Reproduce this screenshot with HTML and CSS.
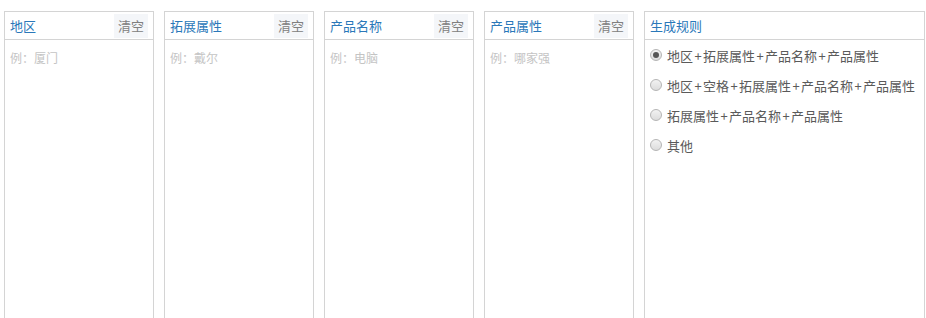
FILE: index.html
```html
<!DOCTYPE html>
<html lang="zh-CN">
<head>
  <meta charset="UTF-8">
  <title>生成规则</title>
  <link rel="stylesheet" href="styles.css">
</head>
<body>
  <div class="panels">
    <div class="panel">
      <div class="panel-head">
        <span class="panel-title">地区</span>
        <span class="clear-btn">清空</span>
      </div>
      <div class="panel-body">
        <div class="placeholder">例：厦门</div>
      </div>
    </div>
    <div class="panel">
      <div class="panel-head">
        <span class="panel-title">拓展属性</span>
        <span class="clear-btn">清空</span>
      </div>
      <div class="panel-body">
        <div class="placeholder">例：戴尔</div>
      </div>
    </div>
    <div class="panel">
      <div class="panel-head">
        <span class="panel-title">产品名称</span>
        <span class="clear-btn">清空</span>
      </div>
      <div class="panel-body">
        <div class="placeholder">例：电脑</div>
      </div>
    </div>
    <div class="panel">
      <div class="panel-head">
        <span class="panel-title">产品属性</span>
        <span class="clear-btn">清空</span>
      </div>
      <div class="panel-body">
        <div class="placeholder">例：哪家强</div>
      </div>
    </div>
    <div class="panel panel-rules">
      <div class="panel-head">
        <span class="panel-title">生成规则</span>
      </div>
      <div class="rule-list">
        <label class="rule"><span class="radio checked"></span>地区<i>+</i>拓展属性<i>+</i>产品名称<i>+</i>产品属性</label>
        <label class="rule"><span class="radio"></span>地区<i>+</i>空格<i>+</i>拓展属性<i>+</i>产品名称<i>+</i>产品属性</label>
        <label class="rule"><span class="radio"></span>拓展属性<i>+</i>产品名称<i>+</i>产品属性</label>
        <label class="rule"><span class="radio"></span>其他</label>
      </div>
    </div>
  </div>
</body>
</html>
```

FILE: styles.css
```css
* {
  box-sizing: border-box;
}

body {
  margin: 0;
  padding: 11px 1px 0 4px;
  font-family: "Noto Sans CJK SC", "Noto Sans", sans-serif;
  font-size: 13px;
  color: #555;
  background: #fff;
  overflow: hidden;
}

.panels {
  display: flex;
  gap: 10px;
}

.panel {
  width: 150px;
  height: 330px;
  border: 1px solid #d4d4d4;
  background: #fff;
}

.panel-rules {
  flex: 1;
}

.panel-head {
  display: flex;
  align-items: center;
  justify-content: space-between;
  height: 28px;
  padding: 0 5px;
  border-bottom: 1px solid #d4d4d4;
}

.panel-title {
  color: #2a78b9;
  line-height: 1;
}

.clear-btn {
  display: flex;
  align-items: center;
  height: 24px;
  padding: 0 4px;
  background: #f4f6f9;
  color: #808080;
}

.panel-body {
  padding: 9px 5px;
}

.placeholder {
  font-size: 12px;
  color: #c4c4c4;
}

.rule-list {
  display: flex;
  flex-direction: column;
  gap: 10px;
  padding: 5px 5px;
}

.rule {
  display: flex;
  align-items: center;
  height: 20px;
  color: #5a5a5a;
}

.rule i {
  font-style: normal;
  padding: 0 1.4px;
}

.radio {
  width: 12px;
  height: 12px;
  margin-right: 5px;
  border-radius: 50%;
  border: 1px solid #b5b5b5;
  background: linear-gradient(#f2f2f2, #dcdcdc);
  position: relative;
}

.radio.checked::after {
  content: "";
  position: absolute;
  left: 2px;
  top: 2px;
  width: 6px;
  height: 6px;
  border-radius: 50%;
  background: #555;
}
```
